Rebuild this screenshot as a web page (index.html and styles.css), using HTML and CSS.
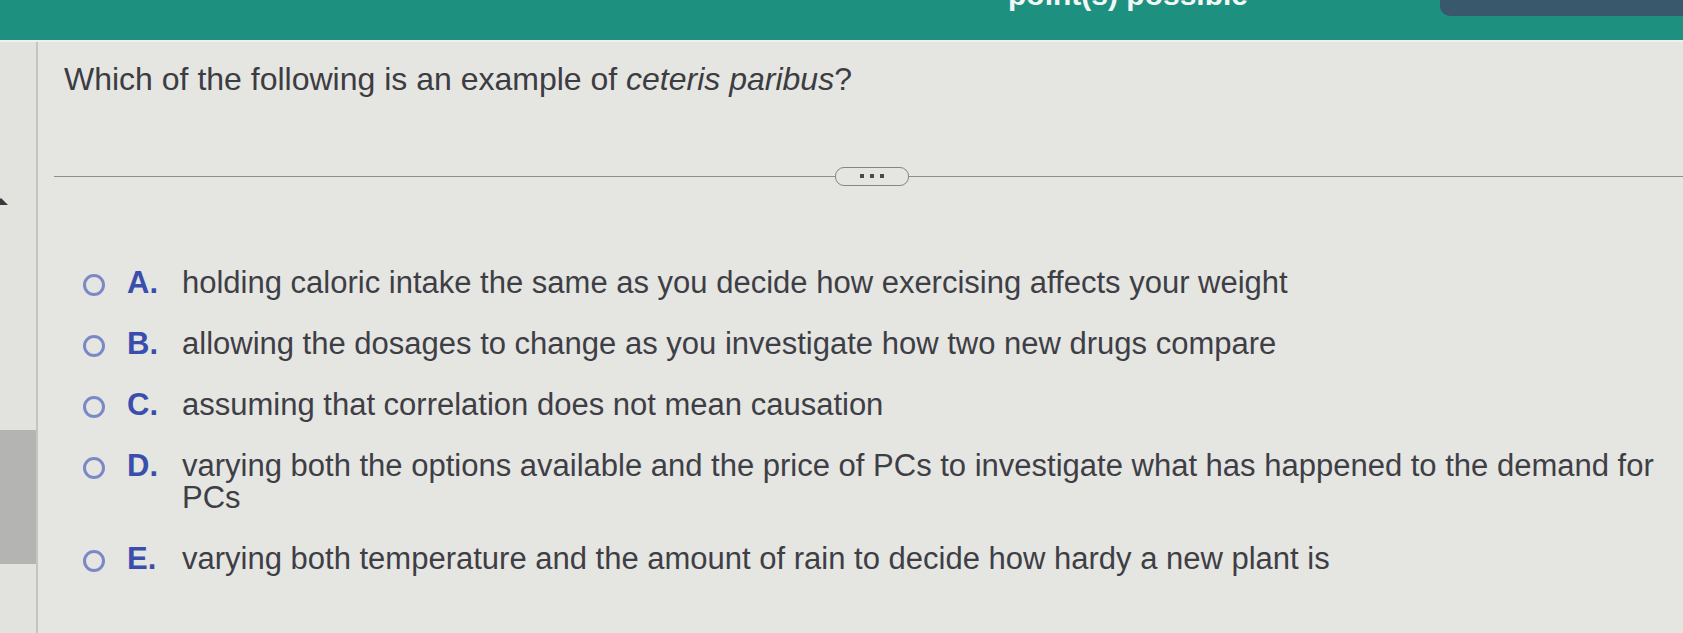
FILE: index.html
```html
<!DOCTYPE html>
<html>
<head>
<meta charset="utf-8">
<link rel="stylesheet" href="styles.css">
</head>
<body>
<div class="screen">
  <div class="topbar">
    <div class="points">point(s) possible</div>
    <div class="tab"></div>
  </div>
  <div class="body">
    <div class="gutter">
      <div class="tri"></div>
      <div class="graybar"></div>
    </div>
    <div class="main">
      <div class="question">Which of the following is an example of <i>ceteris paribus</i>?</div>
      <div class="divider">
        <div class="line short"></div>
        <div class="more"><span></span><span></span><span></span></div>
        <div class="line"></div>
      </div>
      <div class="options">
        <div class="opt"><div class="radio"></div><div class="letter">A.</div><div class="txt">holding caloric intake the same as you decide how exercising affects your weight</div></div>
        <div class="opt"><div class="radio"></div><div class="letter">B.</div><div class="txt">allowing the dosages to change as you investigate how two new drugs compare</div></div>
        <div class="opt"><div class="radio"></div><div class="letter">C.</div><div class="txt">assuming that correlation does not mean causation</div></div>
        <div class="opt"><div class="radio"></div><div class="letter">D.</div><div class="txt">varying both the options available and the price of PCs to investigate what has happened to the demand for PCs</div></div>
        <div class="opt"><div class="radio"></div><div class="letter">E.</div><div class="txt">varying both temperature and the amount of rain to decide how hardy a new plant is</div></div>
      </div>
    </div>
  </div>
</div>
</body>
</html>
```

FILE: styles.css
```css
html, body {
  margin: 0;
  padding: 0;
}
body {
  font-family: "Liberation Sans", Arial, sans-serif;
  background: #e4e4e0;
}
.screen {
  width: 1683px;
  height: 633px;
  overflow: hidden;
  background: #e5e5e1;
  display: flex;
  flex-direction: column;
}
.topbar {
  height: 40px;
  flex: none;
  background: #1e9080;
  display: flex;
  justify-content: flex-end;
  align-items: flex-start;
  gap: 192px;
  border-bottom: 2px solid #eef0ec;
  overflow: hidden;
}
.points {
  color: #f2f7f5;
  font-size: 30px;
  font-weight: bold;
  line-height: 28px;
  margin-top: -19px;
  white-space: nowrap;
}
.tab {
  width: 243px;
  height: 16px;
  background: #3a586b;
  border-bottom-left-radius: 10px;
}
.body {
  flex: 1;
  display: flex;
}
.gutter {
  width: 36px;
  flex: none;
  border-right: 2px solid #c4c4c0;
  display: flex;
  flex-direction: column;
  background: #e2e2de;
}
.tri {
  margin-top: 156px;
  width: 0;
  height: 0;
  border-left: 7px solid transparent;
  border-right: 7px solid transparent;
  border-bottom: 7px solid #3a3a3e;
  margin-left: -6px;
}
.graybar {
  margin-top: 225px;
  width: 36px;
  height: 134px;
  background: #b4b4b2;
}
.main {
  flex: 1;
  padding-left: 16px;
  min-width: 0;
}
.question {
  margin-top: 19px;
  margin-left: 10px;
  font-size: 32px;
  line-height: 36px;
  color: #3c3c42;
}
.divider {
  margin-top: 69px;
  height: 20px;
  display: flex;
  align-items: center;
}
.line {
  flex: 1;
  height: 0;
  border-top: 1.5px solid #8e8e8c;
}
.line.short {
  flex: none;
  width: 781px;
}
.more {
  width: 72px;
  height: 17px;
  border: 1.5px solid #858583;
  border-radius: 9px;
  display: flex;
  align-items: center;
  justify-content: center;
  gap: 6px;
}
.more span {
  width: 4px;
  height: 4px;
  background: #4a4a4c;
}
.options {
  margin-top: 81px;
  padding-left: 29px;
  display: flex;
  flex-direction: column;
  gap: 29px;
}
.opt {
  display: flex;
  align-items: flex-start;
  font-size: 31px;
  line-height: 32px;
}
.radio {
  width: 16px;
  height: 16px;
  border: 3px solid #7b88c6;
  border-radius: 50%;
  margin-top: 7px;
  flex: none;
}
.letter {
  width: 55px;
  margin-left: 22px;
  flex: none;
  font-weight: bold;
  color: #3a4eae;
}
.txt {
  width: 1490px;
  color: #3e3e46;
}
```
